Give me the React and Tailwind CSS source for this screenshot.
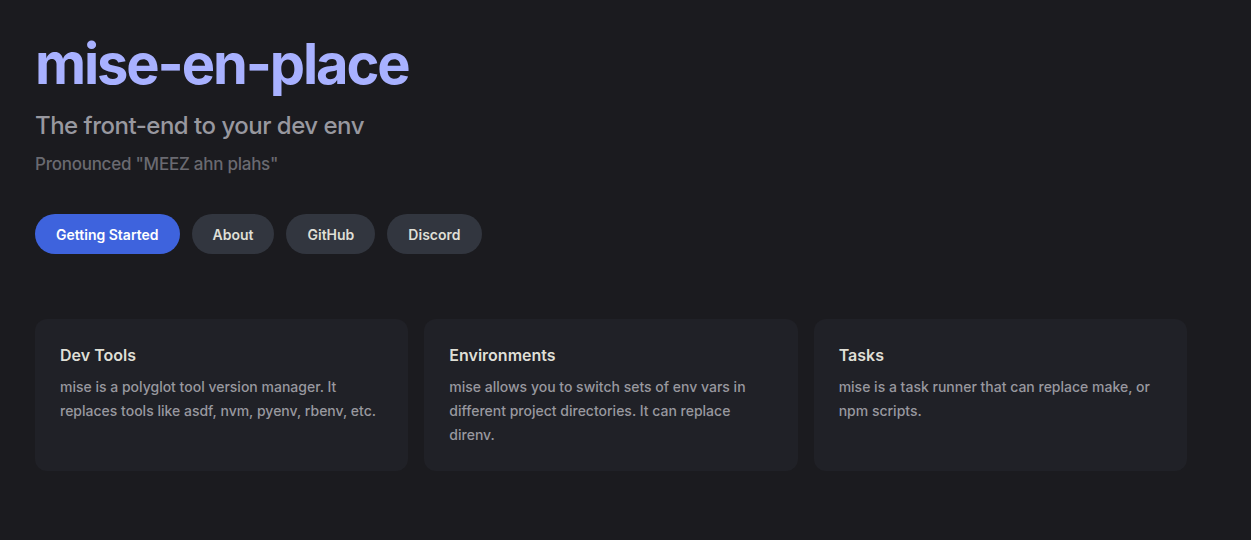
import React from "react";

const features = [
  {
    title: "Dev Tools",
    details: "mise is a polyglot tool version manager. It replaces tools like asdf, nvm, pyenv, rbenv, etc.",
  },
  {
    title: "Environments",
    details: "mise allows you to switch sets of env vars in different project directories. It can replace direnv.",
  },
  {
    title: "Tasks",
    details: "mise is a task runner that can replace make, or npm scripts.",
  },
];

export default function App() {
  return (
    <div
      className="min-h-[540px] w-full bg-[#1b1b1f] pl-[35px] pt-[32px]"
      style={{ fontFamily: "Inter, 'Noto Sans', sans-serif" }}
    >
      <h1 className="text-[56px] leading-[64px] font-bold tracking-[-2.1px] text-[#a8b1ff]">
        mise-en-place
      </h1>
      <p className="mt-[12px] text-[24px] leading-[36px] font-medium tracking-[-0.5px] text-[#98989f]">
        The front-end to your dev env
      </p>
      <p className="mt-[6px] text-[17px] leading-[28px] font-medium tracking-[-0.25px] text-[#6a6a71]">
        Pronounced "MEEZ ahn plahs"
      </p>
      <div className="mt-[36px] flex gap-[12px]">
        <a className="flex h-[40px] items-center rounded-full bg-[#3e63dd] px-[21px] text-[14px] font-semibold text-white">
          Getting Started
        </a>
        <a className="flex h-[40px] items-center rounded-full bg-[#32363f] px-[21px] text-[14px] font-semibold text-[#dfdfd6]">
          About
        </a>
        <a className="flex h-[40px] items-center rounded-full bg-[#32363f] px-[21px] text-[14px] font-semibold text-[#dfdfd6]">
          GitHub
        </a>
        <a className="flex h-[40px] items-center rounded-full bg-[#32363f] px-[21px] text-[14px] font-semibold text-[#dfdfd6]">
          Discord
        </a>
      </div>
      <div className="mt-[65px] grid w-[1152px] grid-cols-3 gap-[16px]">
        {features.map((f) => (
          <div
            key={f.title}
            className="h-[152px] rounded-[12px] bg-[#202127] px-[25px] pt-[24px]"
          >
            <h2 className="text-[16px] leading-[24px] font-semibold text-[#dfdfd6]">
              {f.title}
            </h2>
            <p className="pt-[8px] text-[14px] leading-[24px] font-medium text-[#98989f]">
              {f.details}
            </p>
          </div>
        ))}
      </div>
    </div>
  );
}
